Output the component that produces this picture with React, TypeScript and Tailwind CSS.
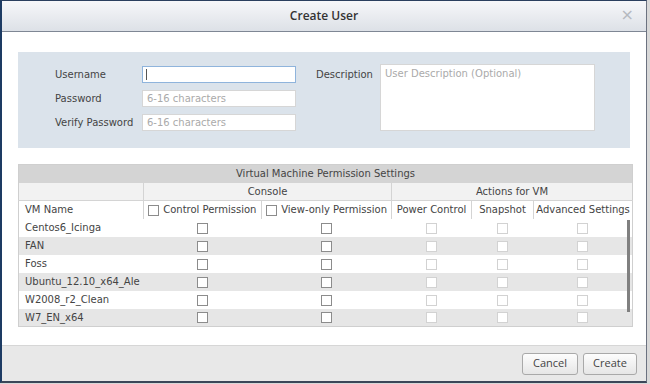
import { useState } from 'react'

const vms = ['Centos6_Icinga', 'FAN', 'Foss', 'Ubuntu_12.10_x64_Ale', 'W2008_r2_Clean', 'W7_EN_x64']

function Box({ disabled }: { disabled?: boolean }) {
  return (
    <span
      className={
        'inline-block w-[11px] h-[11px] align-middle bg-white border ' +
        (disabled ? 'border-[#d2d2d2]' : 'border-[#8c8c8c]')
      }
    />
  )
}

export default function App() {
  const [username, setUsername] = useState('')

  return (
    <div className="w-[650px] h-[384px] bg-[#d8d8d8] overflow-hidden" style={{ fontFamily: '"DejaVu Sans", Verdana, sans-serif' }}>
      <div className="w-[647px] h-[383px] flex flex-col bg-white border-l-2 border-t border-b-2 border-r border-l-[#1d3b63] border-t-[#2a3f5e] border-b-[#3b4658] border-r-[#6b7280]">
        {/* header */}
        <div className="relative h-[31px] shrink-0 flex items-center justify-center bg-gradient-to-b from-[#f6f7f9] to-[#dde1e7] border-b border-[#7f8794]">
          <span className="text-[12px] font-semibold text-[#333]" style={{ fontFamily: '"Open Sans", sans-serif' }}>Create User</span>
          <span className="absolute right-[12px] top-[2px] text-[16px] text-[#b5b9bf]">×</span>
        </div>

        {/* body */}
        <div className="flex-1 px-[16px] pt-[20px]">
          <div className="h-[96px] bg-[#dbe3eb] flex pt-[12px] text-[10px] text-[#444]">
            <div className="w-[124px] pl-[37px] flex flex-col gap-[7px] pt-[2px]">
              <div className="h-[17px] flex items-center">Username</div>
              <div className="h-[17px] flex items-center">Password</div>
              <div className="h-[17px] flex items-center whitespace-nowrap">Verify Password</div>
            </div>
            <div className="w-[154px] flex flex-col gap-[7px] pt-[2px]">
              <div className="relative h-[17px]">
                <input
                  value={username}
                  onChange={(e) => setUsername(e.target.value)}
                  className="h-[17px] w-[154px] bg-white border border-[#8fb4dc] px-[3px] outline-none"
                />
                <span className="absolute left-[4px] top-[3px] w-[1px] h-[11px] bg-[#555]" />
              </div>
              <input placeholder="6-16 characters" className="h-[17px] w-[154px] bg-white border border-[#d6d6d6] px-[4px] placeholder:text-[#aaa] outline-none" />
              <input placeholder="6-16 characters" className="h-[17px] w-[154px] bg-white border border-[#d6d6d6] px-[4px] placeholder:text-[#aaa] outline-none" />
            </div>
            <div className="pl-[20px] w-[84px] pt-[2px]">
              <div className="h-[17px] flex items-center">Description</div>
            </div>
            <textarea
              placeholder="User Description (Optional)"
              className="w-[215px] h-[67px] bg-white border border-[#d6d6d6] px-[4px] py-[1px] resize-none outline-none placeholder:text-[#aaa]"
            />
          </div>

          <table className="mt-[16px] w-[614px] border-collapse table-fixed text-[10px] text-[#444] border border-[#cfcfcf]">
            <colgroup>
              <col className="w-[125px]" />
              <col className="w-[118px]" />
              <col className="w-[130px]" />
              <col className="w-[80px]" />
              <col className="w-[62px]" />
              <col className="w-[99px]" />
            </colgroup>
            <thead>
              <tr className="h-[18px] bg-[#d4d4d4]">
                <th colSpan={6} className="font-normal text-center">Virtual Machine Permission Settings</th>
              </tr>
              <tr className="h-[18px] bg-[#f2f2f2]">
                <th className="border-r border-[#d4d4d4]" />
                <th colSpan={2} className="font-normal text-center border-r border-[#d4d4d4]">Console</th>
                <th colSpan={3} className="font-normal text-center">Actions for VM</th>
              </tr>
              <tr className="h-[18px] bg-white border-t border-[#d4d4d4]">
                <th className="font-normal text-left pl-[6px] border-r border-[#d4d4d4]">VM Name</th>
                <th className="font-normal text-left pl-[4px] border-r border-[#d4d4d4] whitespace-nowrap">
                  <Box /> <span className="ml-[1px]">Control Permission</span>
                </th>
                <th className="font-normal text-left pl-[4px] border-r border-[#d4d4d4] whitespace-nowrap">
                  <Box /> <span className="ml-[1px]">View-only Permission</span>
                </th>
                <th className="font-normal text-center border-r border-[#d4d4d4] whitespace-nowrap">Power Control</th>
                <th className="font-normal text-center border-r border-[#d4d4d4]">Snapshot</th>
                <th className="font-normal text-center whitespace-nowrap">Advanced Settings</th>
              </tr>
            </thead>
            <tbody>
              {vms.map((vm, i) => (
                <tr key={vm} className={'h-[18px] ' + (i % 2 ? 'bg-[#e6e6e6]' : 'bg-white')}>
                  <td className="pl-[6px] whitespace-nowrap">{vm}</td>
                  <td className="text-center"><Box /></td>
                  <td className="text-center"><Box /></td>
                  <td className="text-center"><Box disabled /></td>
                  <td className="text-center"><Box disabled /></td>
                  <td className="text-center relative">
                    <Box disabled />
                    {i === 0 && <span className="absolute right-[2px] top-[1px] h-[92px] w-[3px] bg-[#808080]" />}
                  </td>
                </tr>
              ))}
            </tbody>
          </table>
        </div>

        {/* footer */}
        <div className="h-[36px] shrink-0 bg-[#e8e8e8] border-t border-[#d6d6d6] flex items-center justify-end gap-[5px] pr-[9px]" style={{ fontFamily: '"Open Sans", sans-serif' }}>
          <button className="w-[56px] h-[22px] text-[11px] text-[#444] border border-[#a9a9a9] rounded-[3px] bg-gradient-to-b from-[#fdfdfd] to-[#e6e6e6]">Cancel</button>
          <button className="w-[54px] h-[22px] text-[11px] text-[#444] border border-[#a9a9a9] rounded-[3px] bg-gradient-to-b from-[#fdfdfd] to-[#e6e6e6]">Create</button>
        </div>
      </div>
    </div>
  )
}
